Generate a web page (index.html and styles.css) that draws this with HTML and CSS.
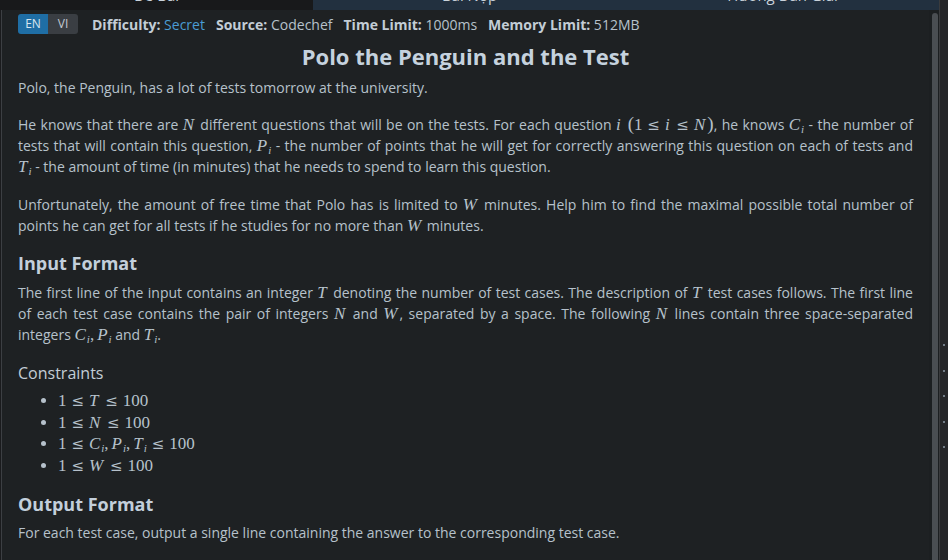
FILE: index.html
```html
<!DOCTYPE html>
<html lang="en">
<head>
<meta charset="utf-8">
<title>Polo the Penguin and the Test</title>
<link rel="stylesheet" href="styles.css">
</head>
<body>
<div class="app">
  <div class="main">
    <div class="tabs">
      <div class="tab tab-active"><span>Đề Bài</span></div>
      <div class="tab"><span>Bài Nộp</span></div>
      <div class="tab"><span>Hướng Dẫn Giải</span></div>
    </div>
    <div class="body">
      <div class="panel">
        <div class="meta">
          <div class="lang">
            <span class="lang-btn lang-on">EN</span><span class="lang-btn">VI</span>
          </div>
          <span class="meta-item"><b>Difficulty:</b> <span class="link">Secret</span></span>
          <span class="meta-item"><b>Source:</b> Codechef</span>
          <span class="meta-item"><b>Time Limit:</b> 1000ms</span>
          <span class="meta-item"><b>Memory Limit:</b> 512MB</span>
        </div>
        <h1 class="title">Polo the Penguin and the Test</h1>
        <p class="p-first">Polo, the Penguin, has a lot of tests tomorrow at the university.</p>
        <p><span class="ln">He knows that there are <span class="m"><i>N</i></span> different questions that will be on the tests. For each question <span class="m"><i>i</i><span class="sp"></span><span class="par">(</span>1<span class="r">≤</span><i>i</i><span class="r">≤</span><i>N</i><span class="par">)</span></span>, he knows <span class="m"><i>C</i><sub>i</sub></span> - the number of</span>
          <span class="ln">tests that will contain this question, <span class="m"><i>P</i><sub>i</sub></span> - the number of points that he will get for correctly answering this question on each of tests and</span>
          <span class="m"><i>T</i><sub>i</sub></span> - the amount of time (in minutes) that he needs to spend to learn this question.</p>
        <p class="p-mid"><span class="ln">Unfortunately, the amount of free time that Polo has is limited to <span class="m"><i>W</i></span> minutes. Help him to find the maximal possible total number of</span>
          points he can get for all tests if he studies for no more than <span class="m"><i>W</i></span> minutes.</p>
        <h2 class="h-bold">Input Format</h2>
        <p class="p-after-h"><span class="ln">The first line of the input contains an integer <span class="m"><i>T</i></span> denoting the number of test cases. The description of <span class="m"><i>T</i></span> test cases follows. The first line</span>
          <span class="ln">of each test case contains the pair of integers <span class="m"><i>N</i></span> and <span class="m"><i>W</i></span>, separated by a space. The following <span class="m"><i>N</i></span> lines contain three space-separated</span>
          integers <span class="m"><i>C</i><sub>i</sub><span class="c">,</span><i>P</i><sub>i</sub></span> and <span class="m"><i>T</i><sub>i</sub></span>.</p>
        <h3 class="h-light">Constraints</h3>
        <ul class="cons">
          <li><span class="m">1<span class="r">≤</span><i>T</i><span class="r">≤</span>100</span></li>
          <li><span class="m">1<span class="r">≤</span><i>N</i><span class="r">≤</span>100</span></li>
          <li><span class="m">1<span class="r">≤</span><i>C</i><sub>i</sub><span class="c">,</span><i>P</i><sub>i</sub><span class="c">,</span><i>T</i><sub>i</sub><span class="r">≤</span>100</span></li>
          <li><span class="m">1<span class="r">≤</span><i>W</i><span class="r">≤</span>100</span></li>
        </ul>
        <h2 class="h-bold">Output Format</h2>
        <p class="p-last">For each test case, output a single line containing the answer to the corresponding test case.</p>
      </div>
      <div class="scroll"><div class="thumb"></div></div>
    </div>
  </div>
  <div class="gutter"></div>
  <div class="splitter">
    <span class="dot"></span><span class="dot"></span><span class="dot"></span><span class="dot"></span><span class="dot"></span>
  </div>
</div>
</body>
</html>
```

FILE: styles.css
```css
html, body {
  margin: 0;
  padding: 0;
  background: #1a1b1d;
}
body {
  font-family: "Open Sans", "Noto Sans", sans-serif;
  font-size: 14px;
  color: #b6c1cb;
  overflow: hidden;
}
.app {
  display: flex;
  width: 948px;
  height: 560px;
}
.main {
  width: 939px;
  display: flex;
  flex-direction: column;
}
.tabs {
  display: flex;
  height: 10px;
  overflow: hidden;
  flex: none;
}
.tab {
  flex: 1;
  background: #22303f;
  text-align: center;
  color: #c9d2db;
  font-size: 15px;
  line-height: 20px;
}
.tab span {
  display: block;
  margin-top: -15px;
}
.tab-active {
  background: #18191b;
}
.body {
  flex: 1;
  display: flex;
  min-height: 0;
  margin-left: 1px;
  border-left: 1px solid #3c3f43;
  background: #1e2123;
}
.panel {
  flex: 1;
  padding: 4px 16px 0 16px;
  overflow: hidden;
}
.meta {
  display: flex;
  align-items: center;
  height: 20px;
  font-size: 14px;
}
.meta b {
  color: #c3cdd6;
  font-weight: 700;
}
.meta-item {
  margin-right: 11px;
  white-space: nowrap;
}
.link {
  color: #4a9cd3;
}
.lang {
  display: flex;
  height: 20px;
  border-radius: 3px;
  overflow: hidden;
  margin-right: 14px;
}
.lang-btn {
  width: 30px;
  text-align: center;
  line-height: 20px;
  font-size: 12px;
  background: #3a3e43;
  color: #c2cad2;
}
.lang-on {
  background: #1f6ea5;
  color: #d9e6f0;
}
.title {
  margin: 7px 0 0;
  font-size: 22px;
  line-height: 30px;
  font-weight: 700;
  text-align: center;
  color: #c5d2de;
}
p {
  margin: 16px 0 0;
  line-height: 21px;
  text-align: justify;
}
.ln {
  display: block;
  text-align: justify;
  text-align-last: justify;
  white-space: nowrap;
}
.p-first {
  margin-top: 6px;
}
.p-mid {
  margin-top: 17px;
}
.p-after-h {
  margin-top: 5px;
}
.p-last {
  margin-top: 4px;
}
.h-bold {
  margin: 14px 0 0;
  font-size: 18px;
  line-height: 27px;
  font-weight: 700;
  color: #c3cfdb;
}
.h-light {
  margin: 16px 0 0;
  font-size: 16px;
  line-height: 24px;
  font-weight: 400;
  color: #c3cdd6;
}
.cons {
  margin: 5px 0 0;
  padding-left: 40px;
}
.cons li {
  line-height: 21.7px;
}
.m {
  font-family: "Liberation Serif", "DejaVu Serif", serif;
  font-size: 17px;
  line-height: 1;
  white-space: nowrap;
}
.m i {
  font-style: italic;
  padding-right: 2px;
}
.m sub {
  font-family: "Liberation Serif", serif;
  font-style: italic;
  font-size: 11px;
  vertical-align: -3px;
  line-height: 0;
  margin-left: -1px;
}
.par {
  font-size: 19px;
}
.r {
  display: inline-block;
  width: 13px;
  margin: 0 4.7px;
  text-align: center;
  font-family: "DejaVu Serif", serif;
  font-size: 15px;
}
.c {
  margin-right: 3px;
}
.sp {
  display: inline-block;
  width: 5px;
}
.scroll {
  width: 10px;
  flex: none;
  display: flex;
  justify-content: flex-end;
  padding-top: 3px;
  background: #1c1f21;
}
.thumb {
  width: 6px;
  height: 100%;
  margin-right: 1px;
  background: #4a4e52;
  border-radius: 3px 3px 0 0;
}
.gutter {
  width: 0;
  border-left: 1px solid #3a3b3d;
}
.splitter {
  width: 8px;
  background: #252628;
  display: flex;
  flex-direction: column;
  align-items: center;
  padding-top: 344px;
  gap: 23.5px;
  box-sizing: border-box;
}
.dot {
  width: 2px;
  height: 2px;
  background: #8c9aa6;
  border-radius: 1px;
}
```
